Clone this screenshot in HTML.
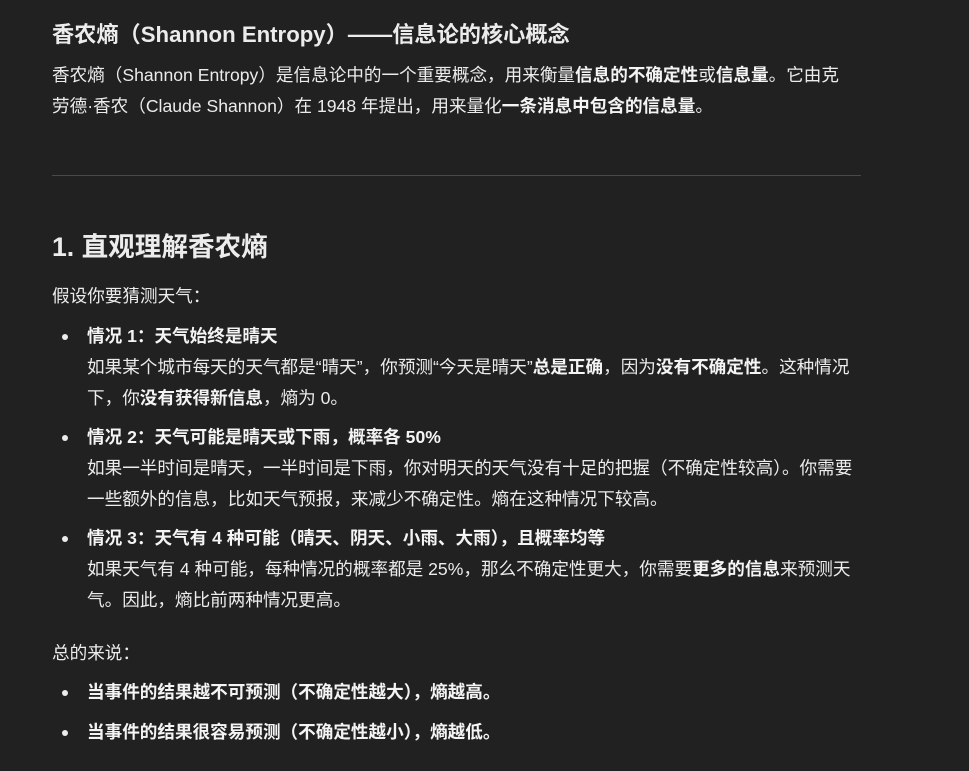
<!DOCTYPE html>
<html><head><meta charset="utf-8"><style>
body{margin:0;background:#212121;width:969px;height:771px;overflow:hidden;color:#ececec;font-family:"Liberation Sans","Noto Sans CJK SC",sans-serif;font-size:17.6px}
.l{position:absolute;left:52px;white-space:nowrap;line-height:31px;height:31px}
.i{left:87px}
b{font-weight:bold;color:#f4f4f4}
.d{position:absolute;left:62px;width:6px;height:6px;border-radius:50%;background:#ececec}
hr{position:absolute;left:52px;top:175px;width:809px;margin:0;border:0;border-top:1px solid #4a4a4a}
</style></head><body>
<div class="l" style="top:19px;font-size:22.2px;font-weight:bold">香农熵（Shannon Entropy）——信息论的核心概念</div>
<div class="l" style="top:60px">香农熵（Shannon Entropy）是信息论中的一个重要概念，用来衡量<b>信息的不确定性</b>或<b>信息量</b>。它由克</div>
<div class="l" style="top:91px">劳德·香农（Claude Shannon）在 1948 年提出，用来量化<b>一条消息中包含的信息量</b>。</div>
<hr>
<div class="l" style="top:231px;font-size:26.6px;font-weight:bold;line-height:32px">1. 直观理解香农熵</div>
<div class="l" style="top:281px">假设你要猜测天气：</div>
<div class="d" style="top:334px"></div>
<div class="l i" style="top:321px"><b>情况 1：天气始终是晴天</b></div>
<div class="l i" style="top:352px">如果某个城市每天的天气都是“晴天”，你预测“今天是晴天”<b>总是正确</b>，因为<b>没有不确定性</b>。这种情况</div>
<div class="l i" style="top:383px">下，你<b>没有获得新信息</b>，熵为 0。</div>
<div class="d" style="top:435px"></div>
<div class="l i" style="top:422px"><b>情况 2：天气可能是晴天或下雨，概率各 50%</b></div>
<div class="l i" style="top:453px">如果一半时间是晴天，一半时间是下雨，你对明天的天气没有十足的把握（不确定性较高）。你需要</div>
<div class="l i" style="top:484px">一些额外的信息，比如天气预报，来减少不确定性。熵在这种情况下较高。</div>
<div class="d" style="top:536px"></div>
<div class="l i" style="top:523px"><b>情况 3：天气有 4 种可能（晴天、阴天、小雨、大雨），且概率均等</b></div>
<div class="l i" style="top:554px">如果天气有 4 种可能，每种情况的概率都是 25%，那么不确定性更大，你需要<b>更多的信息</b>来预测天</div>
<div class="l i" style="top:585px">气。因此，熵比前两种情况更高。</div>
<div class="l" style="top:638px">总的来说：</div>
<div class="d" style="top:690px"></div>
<div class="l i" style="top:677px"><b>当事件的结果越不可预测（不确定性越大），熵越高。</b></div>
<div class="d" style="top:730px"></div>
<div class="l i" style="top:717px"><b>当事件的结果很容易预测（不确定性越小），熵越低。</b></div>
</body></html>
